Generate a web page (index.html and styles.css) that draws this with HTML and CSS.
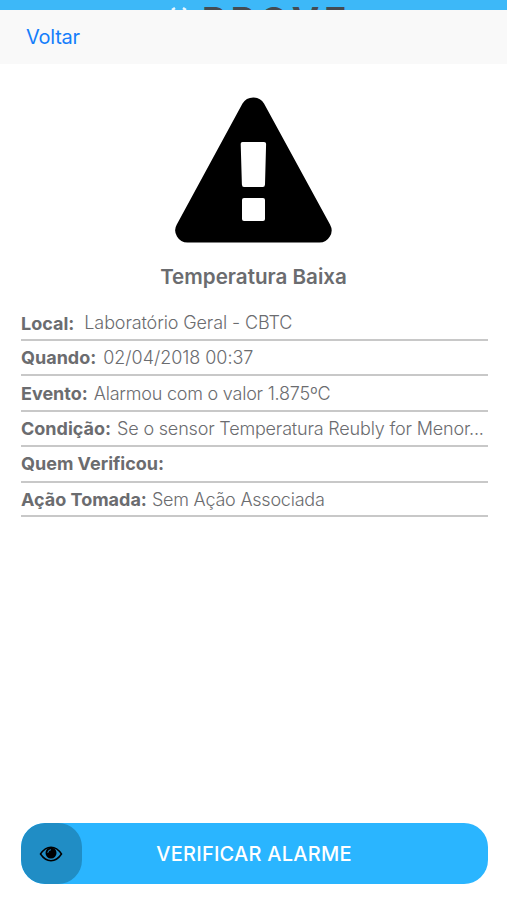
FILE: index.html
```html
<!DOCTYPE html>
<html lang="pt-BR">
<head>
  <meta charset="UTF-8">
  <meta name="viewport" content="width=device-width, initial-scale=1.0">
  <title>Alarme</title>
  <link rel="stylesheet" href="styles.css">
</head>
<body>

<div class="topo">
  <svg class="topo-icone" width="18" height="4" viewBox="0 0 18 4">
    <path d="M2 4 L5 2 M13 2 L16 4" fill="none" stroke="#e8f7ff" stroke-width="2.500"/>
  </svg>
  <span class="topo-nome">PROVE</span>
</div>

<div class="barra">
  <a class="voltar">Voltar</a>
</div>

<div class="conteudo">
  <svg class="alerta" width="157" height="146" viewBox="0 0 157 146">
    <path d="M67.500 6.500 Q71 .5 78.300 .5 Q85.500 .5 89 6.500 L155 127.500 Q158.500 134 154.800 139.500 Q151.300 145.500 144.500 145.500 H12.500 Q5.500 145.500 2 139.500 Q-1.700 133.500 1.800 127.500 Z"/>
    <path fill="#fff" d="M67.500 45 H89 Q91.200 45 91.100 47 L90 87.500 Q89.900 90 87.800 90 H69 Q67 90 66.900 87.500 L65.700 47 Q65.600 45 67.500 45 Z"/>
    <rect x="67" y="101" width="23" height="23" rx="2" fill="#fff"/>
  </svg>

  <h2 class="titulo">Temperatura Baixa</h2>

  <div class="lista">
    <div class="linha local"><b>Local:</b><span>Laboratório Geral - CBTC</span></div>
    <div class="linha quando"><b>Quando:</b><span>02/04/2018 00:37</span></div>
    <div class="linha evento"><b>Evento:</b><span>Alarmou com o valor 1.875ºC</span></div>
    <div class="linha condicao"><b>Condição:</b><span>Se o sensor Temperatura Reubly for Menor...</span></div>
    <div class="linha quem"><b>Quem Verificou:</b></div>
    <div class="linha acao"><b>Ação Tomada:</b><span>Sem Ação Associada</span></div>
  </div>
</div>

<div class="rodape">
  <button class="btn-verificar">
    <span class="btn-icone">
      <svg width="24" height="18" viewBox="0 0 24 18">
        <path d="M1.500 9 Q6 2.200 12 2.200 Q18 2.200 22.500 9 Q18 15.700 12 15.700 Q6 15.700 1.500 9 Z" fill="none" stroke="#000" stroke-width="1.500"/>
        <circle cx="12" cy="8" r="5.500"/>
        <path d="M8.800 7.800 Q9 4.900 12 4.700" fill="none" stroke="#208dc5" stroke-width="1"/>
      </svg>
    </span>
    <span class="btn-texto">VERIFICAR ALARME</span>
  </button>
</div>

</body>
</html>
```
FILE: styles.css
```css
* {
    box-sizing: border-box;
}

body {
    font-family: Inter, "Liberation Sans", sans-serif;
    margin: 0;
    height: 900px;
    display: flex;
    flex-direction: column;
    background-color: #fff;
    color: #6b6c6f;
    overflow: hidden;
}

.topo {
    height: 10px;
    flex: none;
    display: flex;
    align-items: flex-start;
    padding: 6px 0 0 170px;
    background-color: #3db8f8;
    overflow: hidden;
}

.topo-icone {
    flex: none;
}

.topo-nome {
    margin: 0 0 0 14px;
    font-size: 37px;
    line-height: 30px;
    font-weight: 700;
    letter-spacing: 4.8px;
    color: #444b52;
}

.barra {
    height: 54px;
    flex: none;
    display: flex;
    align-items: center;
    padding: 0 26px;
    background-color: #f9f9f9;
}

.voltar {
    font-size: 20px;
    letter-spacing: -0.25px;
    color: #157efb;
}

.conteudo {
    flex: 1;
    display: flex;
    flex-direction: column;
    padding: 33px 19px 0 21px;
}

.alerta {
    display: block;
    margin: 0 0 0 154px;
}

.titulo {
    margin: 21px 0 0;
    padding-right: 2px;
    text-align: center;
    font-size: 20.6px;
    line-height: 26px;
    font-weight: 600;
}

.lista {
    margin-top: 15.6px;
}

.linha {
    height: 35.4px;
    display: flex;
    align-items: center;
    border-bottom: 2px solid #c8c8c8;
    font-size: 18px;
    white-space: nowrap;
}

.linha b {
    font-weight: 700;
}

.linha span {
    font-weight: 300;
    margin-left: 6px;
    letter-spacing: -0.18px;
}

.linha.local b {
    padding-top: 2px;
}

.linha.local span {
    margin-left: 10px;
    letter-spacing: -0.12px;
}

.linha.quando span {
    margin-left: 7px;
    letter-spacing: -0.04px;
}

.linha.evento span {
    letter-spacing: -0.22px;
}

.linha.acao {
    height: 34.6px;
    padding-top: 1px;
}

.linha.acao span {
    margin-left: 5px;
    letter-spacing: -0.22px;
}

.rodape {
    padding: 0 19px 16px 21px;
}

.btn-verificar {
    width: 100%;
    height: 61px;
    display: flex;
    align-items: center;
    padding: 0;
    border: none;
    border-radius: 24px;
    background-color: #2ab5ff;
    color: #fff;
    font-family: inherit;
    overflow: hidden;
}

.btn-icone {
    width: 61px;
    height: 61px;
    display: flex;
    align-items: center;
    justify-content: center;
    padding-right: 2px;
    border-radius: 24px;
    background-color: #208dc5;
}

.btn-texto {
    flex: 1;
    padding-right: 62px;
    font-size: 20px;
    font-weight: 500;
    letter-spacing: 0.25px;
}
```
